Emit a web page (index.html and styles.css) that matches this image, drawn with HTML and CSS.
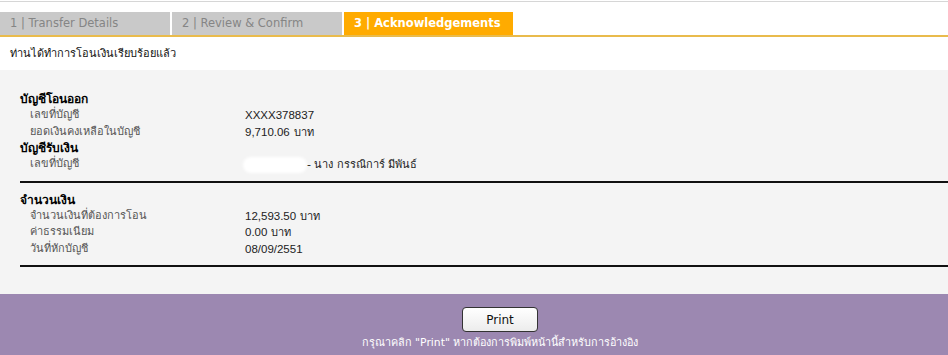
FILE: index.html
```html
<!DOCTYPE html>
<html lang="th">
<head>
    <meta charset="utf-8">
    <title>Transfer - Acknowledgements</title>
    <link rel="stylesheet" href="styles.css">
</head>
<body>
    <div class="topline"></div>
    <div class="tabs">
        <div class="tab">1 | Transfer Details</div>
        <div class="tab">2 | Review &amp; Confirm</div>
        <div class="tab active">3 | Acknowledgements</div>
    </div>
    <p class="message">ท่านได้ทำการโอนเงินเรียบร้อยแล้ว</p>

    <div class="panel">
        <div class="section">
            <h3>บัญชีโอนออก</h3>
            <div class="row"><span class="label">เลขที่บัญชี</span><span class="value">XXXX378837</span></div>
            <div class="row"><span class="label">ยอดเงินคงเหลือในบัญชี</span><span class="value">9,710.06<span class="th">บาท</span></span></div>
            <h3>บัญชีรับเงิน</h3>
            <div class="row"><span class="label">เลขที่บัญชี</span><span class="value"><span class="blur"></span><span class="th">- นาง กรรณิการ์ มีพันธ์</span></span></div>
        </div>
        <div class="section">
            <h3>จำนวนเงิน</h3>
            <div class="row"><span class="label">จำนวนเงินที่ต้องการโอน</span><span class="value">12,593.50<span class="th">บาท</span></span></div>
            <div class="row"><span class="label">ค่าธรรมเนียม</span><span class="value">0.00<span class="th">บาท</span></span></div>
            <div class="row"><span class="label">วันที่หักบัญชี</span><span class="value">08/09/2551</span></div>
        </div>
    </div>

    <div class="footer">
        <button class="print-btn">Print</button>
        <p class="hint">กรุณาคลิก "Print" หากต้องการพิมพ์หน้านี้สำหรับการอ้างอิง</p>
    </div>
</body>
</html>
```
FILE: styles.css
```css
body {
    margin: 0;
    background-color: white;
    font-family: Tahoma, "DejaVu Sans", "Noto Sans", sans-serif;
    color: #222;
}
.topline {
    margin-top: 1px;
    border-top: 1px solid #d6d6d6;
}
.tabs {
    display: flex;
    gap: 2px;
    margin-top: 10px;
    border-bottom: 2px solid #e9bb4c;
}
.tab {
    width: 160px;
    height: 23px;
    line-height: 23px;
    padding-left: 10px;
    background-color: #c9c9c9;
    color: #858585;
    font-family: Verdana, "DejaVu Sans", sans-serif;
    font-size: 11.5px;
}
.tab.active {
    width: 159px;
    background-color: #ffab00;
    color: white;
    font-weight: bold;
}
.message {
    margin: 0;
    height: 33px;
    padding-left: 10px;
    line-height: 34px;
    font-size: 11px;
    color: #111;
}
.panel {
    background-color: #f4f4f4;
    padding: 21px 0 27px 20px;
}
.section {
    border-bottom: 2px solid #111;
    padding-bottom: 8px;
}
.section + .section {
    padding-top: 9px;
}
h3 {
    margin: 0;
    height: 16px;
    line-height: 16px;
    font-size: 12px;
    font-weight: bold;
    color: #000;
}
.row {
    display: flex;
    height: 16.5px;
    line-height: 16.5px;
    font-size: 11px;
}
.label {
    width: 215px;
    padding-left: 10px;
    color: #555;
}
.value {
    font-family: "Liberation Sans", Arial, sans-serif;
    font-size: 11.5px;
    color: #222;
}
.th {
    margin-left: 4px;
    font-family: Tahoma, "DejaVu Sans", sans-serif;
    font-size: 11px;
    white-space: pre;
}
.blur + .th {
    margin-left: 2px;
}
.blur {
    display: inline-block;
    vertical-align: middle;
    width: 60px;
    height: 12px;
    border-radius: 6px;
    background-color: white;
    box-shadow: 0 0 3px 2px white;
}
.footer {
    height: 63px;
    background-color: #9c88b1;
    text-align: center;
    padding-left: 52px;
    box-sizing: border-box;
}
.print-btn {
    margin-top: 13px;
    width: 76px;
    height: 25px;
    border: 1px solid #333;
    border-radius: 4px;
    background: linear-gradient(white, #ececec);
    font-family: Tahoma, "DejaVu Sans", sans-serif;
    font-size: 12px;
    color: #111;
}
.hint {
    margin: 2px 0 0;
    font-size: 10.8px;
    color: white;
}
```
